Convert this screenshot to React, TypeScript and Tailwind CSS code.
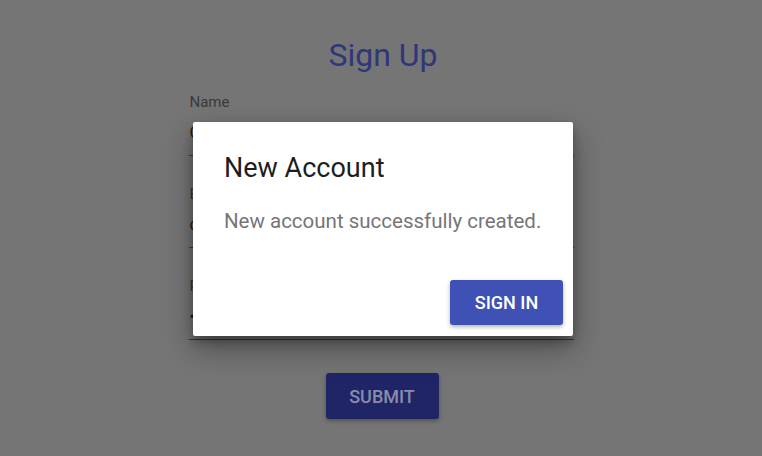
import React from 'react';

const fields = [
  { label: 'Name', value: 'Chris' },
  { label: 'Email', value: 'chris@mail.com' },
  { label: 'Password', value: '••••••••' },
];

export default function App() {
  return (
    <div className="relative w-[762px] h-[456px] overflow-hidden bg-[#757575] font-['Roboto',sans-serif]">
      {/* Form beneath the backdrop */}
      <div className="flex flex-col items-center pt-[36px]">
        <h1 className="text-[32px] leading-[38px] text-[#30367a] ml-[4px]">Sign Up</h1>
        <div className="w-[385px] mt-[19px] flex flex-col">
          {fields.map((f) => (
            <div key={f.label} className="h-[92px] flex flex-col">
              <span className="text-[15px] leading-[18px] text-[#3a3a3a] pl-[1px]">{f.label}</span>
              <span className="mt-[12px] text-[16px] leading-[20px] text-[#1c1c1c] pl-[1px]">{f.value}</span>
              <div className="mt-[12px] h-px bg-[#3a3a3a]" />
            </div>
          ))}
        </div>
        <button className="mt-[4px] ml-[2px] w-[113px] h-[46px] rounded-[3px] bg-[#1f2566] text-[#898cab] text-[18px] font-medium shadow-[0_2px_4px_rgba(0,0,0,0.3)]">
          SUBMIT
        </button>
      </div>

      {/* Dialog */}
      <div className="absolute left-[193px] top-[122px] w-[380px] h-[214px] bg-white rounded-[2px] shadow-[0_12px_30px_rgba(0,0,0,0.35),0_6px_10px_rgba(0,0,0,0.25)] flex flex-col">
        <div className="px-[31px] pt-[30px]">
          <h2 className="text-[27px] leading-[32px] text-[#1e1e1e]">New Account</h2>
          <p className="mt-[25px] text-[20.5px] leading-[24px] text-[#767676]">New account successfully created.</p>
        </div>
        <div className="mt-auto flex justify-end px-[10px] pb-[11px]">
          <button className="w-[113px] h-[45px] rounded-[3px] bg-[#3f51b5] text-white text-[18px] font-medium shadow-[0_2px_4px_rgba(0,0,0,0.3)]">
            SIGN IN
          </button>
        </div>
      </div>
    </div>
  );
}
